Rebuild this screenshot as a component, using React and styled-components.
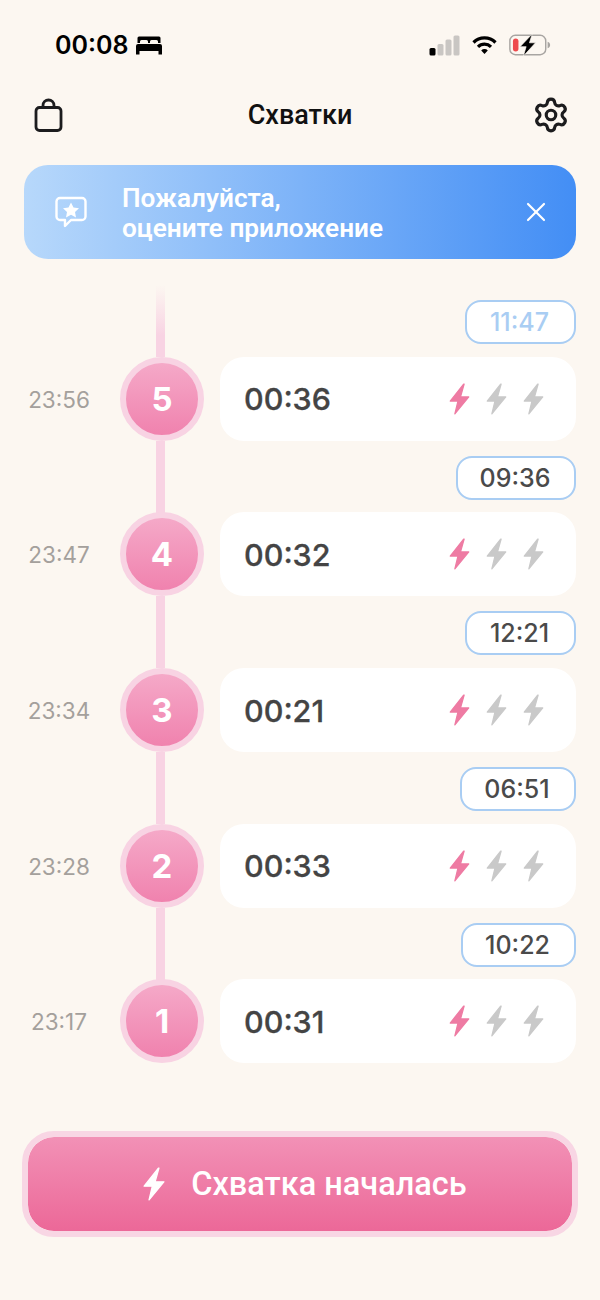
import React from "react";
import styled, { createGlobalStyle } from "styled-components";
import { Settings, X } from "lucide-react";

const contractions = [
  { n: 5, at: "23:56", length: "00:36", gap: "11:47", pillWidth: 111, faded: true },
  { n: 4, at: "23:47", length: "00:32", gap: "09:36", pillWidth: 120 },
  { n: 3, at: "23:34", length: "00:21", gap: "12:21", pillWidth: 111 },
  { n: 2, at: "23:28", length: "00:33", gap: "06:51", pillWidth: 116 },
  { n: 1, at: "23:17", length: "00:31", gap: "10:22", pillWidth: 115 },
];

const Bolt = ({ color, width = 21, height = 32 }) => (
  <svg width={width} height={height} viewBox="0 0 20 31">
    <path
      d="M14 1 L1 17.5 H8.5 L5.5 30 L19 13.5 H11 L14.5 1 Z"
      fill={color}
      stroke={color}
      strokeWidth="1.2"
      strokeLinejoin="round"
    />
  </svg>
);

const BagIcon = () => (
  <svg width="30" height="34" viewBox="0 -1 30 34" fill="none" stroke="#1c1c1e" strokeWidth="2.8">
    <rect x="2" y="8.5" width="25" height="23" rx="3.5" />
    <path d="M9 8.5V6.5a5.5 5.5 0 0 1 11 0v2" />
  </svg>
);

const BedIcon = () => (
  <svg width="26" height="20" viewBox="0 0 26 20" fill="#000">
    <path d="M3 1.5h20a1.500 1.500 0 0 1 1.500 1.500v5h-2.500V6.500a1.500 1.500 0 0 0-1.500-1.500h-5A1.500 1.500 0 0 0 14 6.500V8h-2V6.500A1.500 1.500 0 0 0 10.500 5h-5A1.500 1.500 0 0 0 4 6.500V8H1.500V3A1.500 1.500 0 0 1 3 1.500Z" />
    <path d="M2 9h22a2 2 0 0 1 2 2v5H0v-5a2 2 0 0 1 2-2ZM0 16h3.500v3.500H0ZM22.500 16H26v3.500h-3.500Z" />
  </svg>
);

const SignalIcon = () => (
  <svg width="31" height="21" viewBox="0 0 31 21">
    <rect x="0.500" y="13" width="6" height="7.500" rx="1.500" fill="#000" />
    <rect x="8.500" y="9" width="6" height="11.500" rx="1.500" fill="#c9c6c3" />
    <rect x="16.500" y="4.500" width="6" height="16" rx="1.500" fill="#c9c6c3" />
    <rect x="24.500" y="0.500" width="6" height="20" rx="1.500" fill="#c9c6c3" />
  </svg>
);

const WifiIcon = () => (
  <svg width="27" height="20" viewBox="0 0 26 20" fill="none" stroke="#000" strokeWidth="3.200">
    <path d="M2 7.500a15.500 15.500 0 0 1 22 0" />
    <path d="M6.500 11.800a9.300 9.300 0 0 1 13 0" />
    <path d="M13 19l-3.300-3.500a4.600 4.600 0 0 1 6.600 0Z" fill="#000" stroke="none" />
  </svg>
);

const BatteryIcon = () => (
  <svg width="42" height="22" viewBox="0 0 38 20">
    <rect x="0.700" y="1.200" width="32.600" height="17.600" rx="5" fill="none" stroke="#a8a5a2" strokeWidth="1.300" />
    <rect x="3.500" y="4" width="5" height="12" rx="2.500" fill="#ee4b4e" />
    <path d="M35 7v6c1.500-.5 2.300-1.700 2.300-3s-.8-2.500-2.300-3Z" fill="#a8a5a2" />
    <path d="M21 0 L10 11.500 H15.500 L13 20 L24 8 H18.500 Z" fill="#000" stroke="#fcf7f1" strokeWidth="0.600" />
  </svg>
);

const RateIcon = () => (
  <svg width="34" height="34" viewBox="0 0 34 34" fill="none">
    <path
      d="M6 3h22a3.500 3.500 0 0 1 3.500 3.500v15A3.500 3.500 0 0 1 28 25H17l-6 6v-6H6a3.500 3.500 0 0 1-3.500-3.500v-15A3.500 3.500 0 0 1 6 3Z"
      stroke="#fff"
      strokeWidth="2.400"
      strokeLinejoin="round"
    />
    <path
      d="M17 7.500l2.500 5 5.500.700-4 3.800 1 5.500-5-2.700-5 2.700 1-5.500-4-3.800 5.500-.700Z"
      fill="#fff"
    />
  </svg>
);

export default function App() {
  return (
    <Screen>
      <GlobalStyle />
      <StatusBar>
        <Clock>
          00:08
          <BedIcon />
        </Clock>
        <StatusIcons>
          <SignalIcon />
          <WifiIcon />
          <BatteryIcon />
        </StatusIcons>
      </StatusBar>

      <Header>
        <BagIcon />
        <Title>Схватки</Title>
        <GearSlot>
          <Settings size={38} color="#1c1c1e" strokeWidth={2} />
        </GearSlot>
      </Header>

      <Banner>
        <RateIcon />
        <BannerText>
          Пожалуйста,
          <br />
          оцените приложение
        </BannerText>
        <X size={32} color="#fff" strokeWidth={1.6} />
      </Banner>

      <Timeline>
        {contractions.map(c => (
          <React.Fragment key={c.n}>
            <GapRow>
              <Connector $faded={c.faded} />
              <Pill $width={c.pillWidth} $faded={c.faded}>
                {c.gap}
              </Pill>
            </GapRow>
            <Row>
              <At>{c.at}</At>
              <Node>
                <Number>{c.n}</Number>
              </Node>
              <Card>
                <Length>{c.length}</Length>
                <Bolts>
                  <Bolt color="#ee7ba3" />
                  <Bolt color="#c9c9c9" />
                  <Bolt color="#c9c9c9" />
                </Bolts>
              </Card>
            </Row>
          </React.Fragment>
        ))}
      </Timeline>

      <StartButton>
        <Bolt color="#fff" width={22} height={34} />
        Схватка началась
      </StartButton>
    </Screen>
  );
}

const GlobalStyle = createGlobalStyle`
  body {
    margin: 0;
    background: #fcf7f1;
    font-family: "Inter", "Roboto", sans-serif;
  }
`;
const Screen = styled.div`
  width: 600px;
  height: 1300px;
  overflow: hidden;
  background: #fcf7f1;
`;
const StatusBar = styled.div`
  height: 32px;
  margin-top: 29px;
  padding: 0 49px 0 55px;
  display: flex;
  align-items: center;
  justify-content: space-between;
`;
const Clock = styled.div`
  display: flex;
  align-items: center;
  gap: 8px;
  font-size: 25px;
  font-weight: 600;
  color: #000;
`;
const StatusIcons = styled.div`
  display: flex;
  align-items: center;
  gap: 11px;
`;
const Header = styled.div`
  height: 40px;
  margin-top: 34px;
  padding: 0 30px 0 34px;
  display: grid;
  grid-template-columns: 1fr auto 1fr;
  align-items: center;
`;
const GearSlot = styled.div`
  justify-self: end;
  height: 38px;
`;
const Title = styled.div`
  margin-right: 4px;
  font-family: "Roboto", sans-serif;
  font-size: 27px;
  font-weight: 500;
  color: #111;
`;
const Banner = styled.div`
  height: 94px;
  margin: 30px 24px 0;
  padding: 0 24px 0 30px;
  border-radius: 24px;
  display: flex;
  align-items: center;
  background: linear-gradient(90deg, #b7d8fb 0%, #438ef5 100%);
`;
const BannerText = styled.div`
  flex: 1;
  margin-left: 34px;
  padding-top: 2px;
  font-family: "Roboto", sans-serif;
  font-size: 26.200px;
  line-height: 30px;
  font-weight: 600;
  color: #fff;
`;
const Timeline = styled.div`
  margin-top: 26px;
  padding: 0 24px;
`;
const GapRow = styled.div`
  height: 71.700px;
  padding-top: 15px;
  display: grid;
  grid-template-columns: 96px 84px 1fr;
  box-sizing: border-box;
`;
const Connector = styled.div`
  grid-column: 2;
  justify-self: center;
  width: 9px;
  height: 72px;
  margin: -15px 3px 0 0;
  background: ${p =>
    p.$faded
      ? "linear-gradient(180deg, #fcf7f1 0%, #f8d3e3 70%)"
      : "#f8d3e3"};
`;
const Pill = styled.div`
  grid-column: 3;
  justify-self: end;
  width: ${p => p.$width}px;
  height: 44px;
  box-sizing: border-box;
  border: 2px solid #a9cdf3;
  border-radius: 16px;
  background: #fff;
  display: flex;
  align-items: center;
  justify-content: center;
  padding-right: 2px;
  font-size: 25px;
  font-weight: 500;
  color: ${p => (p.$faded ? "#a9cdf3" : "#4a4a4a")};
`;
const Row = styled.div`
  height: 84px;
  display: grid;
  grid-template-columns: 96px 84px 1fr;
  align-items: center;
`;
const At = styled.div`
  padding: 1px 26px 0 0;
  text-align: center;
  font-size: 22.500px;
  color: #a4a09c;
`;
const Node = styled.div`
  box-sizing: border-box;
  width: 84px;
  height: 84px;
  border: 6px solid #f8d3e3;
  border-radius: 50%;
  background: linear-gradient(180deg, #f5a9c8 0%, #f082ae 100%);
  display: flex;
  align-items: center;
  justify-content: center;
`;
const Number = styled.span`
  font-size: 33px;
  font-weight: 700;
  color: #fff;
`;
const Card = styled.div`
  height: 84px;
  margin-left: 16px;
  padding: 0 32px 0 24px;
  border-radius: 24px;
  background: #fff;
  display: flex;
  align-items: center;
  justify-content: space-between;
`;
const Length = styled.span`
  font-size: 30.500px;
  font-weight: 500;
  color: #444;
  -webkit-text-stroke: 0.3px #444;
`;
const Bolts = styled.div`
  display: flex;
  gap: 16px;
`;
const StartButton = styled.div`
  box-sizing: border-box;
  height: 106px;
  margin: 68px 22px 0;
  padding-left: 10px;
  border: 6px solid #f8d6e4;
  border-radius: 32px;
  background: linear-gradient(180deg, #f291b6 0%, #ec6898 100%);
  background-clip: padding-box;
  display: flex;
  align-items: center;
  justify-content: center;
  gap: 26px;
  font-family: "Roboto", sans-serif;
  font-size: 32.500px;
  font-weight: 500;
  color: #fff;
`;
